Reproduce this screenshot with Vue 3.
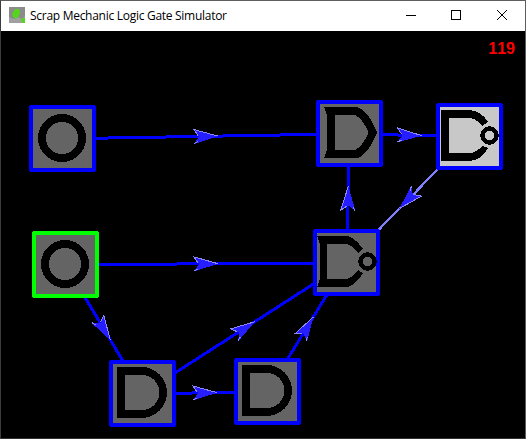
<script setup>
const nodes = [
  { id: 'a', kind: 'switch', x: 29, y: 105 },
  { id: 'b', kind: 'or', x: 316, y: 100 },
  { id: 'c', kind: 'nand', x: 436, y: 103, lit: true },
  { id: 'd', kind: 'switch', x: 32, y: 231, selected: true },
  { id: 'e', kind: 'nor', x: 313, y: 229 },
  { id: 'f', kind: 'and', x: 109, y: 360 },
  { id: 'g', kind: 'and', x: 234, y: 358 },
]

const links = [
  ['a', 'b'], ['b', 'c'], ['c', 'e', true], ['d', 'e'], ['e', 'b'],
  ['d', 'f'], ['f', 'e'], ['f', 'g'], ['g', 'e'],
]

const wires = links.map(([from, to, lit]) => {
  const s = nodes.find((n) => n.id === from)
  const t = nodes.find((n) => n.id === to)
  const x1 = s.x + 33.5
  const y1 = s.y + 33.8
  const x2 = t.x + 33.5
  const y2 = t.y + 33.8
  const angle = (Math.atan2(y2 - y1, x2 - x1) * 180) / Math.PI
  return {
    key: from + to, lit, x1, y1, x2, y2,
    arrow: `translate(${(x1 + x2) / 2} ${(y1 + y2) / 2}) rotate(${angle})`,
  }
})

const glyphs = {
  and: 'M8 7H32.5A25.5 25.5 0 0 1 32.5 58H8ZM16 15V50H33A17.5 17.5 0 0 0 33 15Z',
  or: 'M8 7H41Q52 10 61 32.5Q53 53 42 58H8L11 50V15ZM19 15V50H39Q47 46 52.5 32.5Q47 19 39 15Z',
  nand: 'M5 7H34Q45 8 52 19L46 23Q40 15 33 15H13V50H33Q40 50 46 43L52 45Q45 57 34 58H5Z',
  nor: 'M4 7H35Q43 10 50 20L45 24Q40 17 34 15H14V50H34Q40 48 45 41L50 44Q43 55 35 58H4L7 50V15Z',
}
</script>

<template>
  <div class="window">
    <header class="titlebar">
      <svg class="app-icon" width="16" height="16" viewBox="0 0 16 16">
        <rect width="16" height="16" fill="#8b8b8b" />
        <path d="M0 10L5 12L9 10L13 12L16 9V16H0Z" fill="#a0a0a0" />
        <path d="M6 2L10 2L11 5L10 9L7 12L4 10L3 7Z" fill="#55d51c" />
        <path d="M13 11H16V16H14L12 14Z" fill="#55d51c" />
      </svg>
      <span class="title">Scrap Mechanic Logic Gate Simulator</span>
      <nav class="controls">
        <svg width="46" height="29" viewBox="0 0 46 29"><path d="M19 14.5H29" /></svg>
        <svg width="46" height="29" viewBox="0 0 46 29"><rect x="18.5" y="9.5" width="9" height="9" /></svg>
        <svg class="close" width="46" height="29" viewBox="0 0 46 29"><path d="M18 9L28 19M28 9L18 19" /></svg>
      </nav>
    </header>
    <main class="canvas">
      <svg class="scene" width="524" height="407" viewBox="1 31 524 407">
        <g v-for="w in wires" :key="w.key">
          <line :class="['wire', { lit: w.lit }]" :x1="w.x1" :y1="w.y1" :x2="w.x2" :y2="w.y2" />
          <g :transform="w.arrow">
            <path class="arrow" d="M12.5 0L-12 7.5L-7 0L-12 -7.5Z" />
            <path class="arrow-edge" d="M12 0L-12 -7L-8 -1M-12 7L-8 5" />
          </g>
        </g>
        <g v-for="n in nodes" :key="n.id" :transform="`translate(${n.x} ${n.y})`">
          <rect :class="['body', { lit: n.lit }]" x="3" y="3" width="61" height="61" />
          <circle v-if="n.kind === 'switch'" class="ring" cx="33" cy="33" r="20" />
          <path v-else class="glyph" :d="glyphs[n.kind]" />
          <rect :class="['frame', { selected: n.selected }]" x="2" y="2" width="63" height="63" rx="1" />
          <circle v-if="n.kind === 'nand'" class="bubble" cx="53.5" cy="32.5" r="7" />
          <circle v-if="n.kind === 'nor'" class="bubble" cx="54.5" cy="32.5" r="7" />
        </g>
      </svg>
      <span class="fps">119</span>
    </main>
  </div>
</template>

<style>
body {
  margin: 0;
  background: #000;
}
</style>

<style scoped>
.window {
  box-sizing: border-box;
  width: 526px;
  height: 439px;
  display: flex;
  flex-direction: column;
  border: 1px solid #5e5e5e;
  border-left-color: #3c3c3c;
  border-bottom-color: #333;
  background: #000;
  overflow: hidden;
}
.titlebar {
  height: 30px;
  flex: none;
  display: flex;
  align-items: center;
  padding-left: 8px;
  background: #fff;
}
.app-icon {
  flex: none;
  margin-right: 5px;
  margin-bottom: 2px;
}
.title {
  flex: 1;
  font: 12px/28px "Open Sans", "Noto Sans", sans-serif;
  letter-spacing: -0.28px;
  white-space: nowrap;
  color: #000;
}
.controls {
  display: flex;
  height: 29px;
  align-self: flex-start;
}
.controls svg {
  fill: none;
  stroke: #000;
  stroke-width: 1;
}
.canvas {
  flex: 1;
  position: relative;
}
.scene {
  display: block;
  shape-rendering: crispEdges;
}
.wire {
  stroke: #00f;
  stroke-width: 3;
}
.wire.lit {
  stroke: #8080ff;
  stroke-width: 2.2;
}
.arrow {
  fill: #261eff;
}
.arrow-edge {
  fill: none;
  stroke: #8c88f8;
  stroke-width: 1;
}
.body {
  fill: #646464;
}
.body.lit {
  fill: #c8c8c8;
}
.frame {
  fill: none;
  stroke: #00f;
  stroke-width: 4;
  stroke-linejoin: round;
}
.frame.selected {
  stroke: #0f0;
}
.ring {
  fill: none;
  stroke: #000;
  stroke-width: 8;
}
.glyph {
  fill: #000;
  fill-rule: evenodd;
}
.bubble {
  fill: none;
  stroke: #000;
  stroke-width: 4.5;
}
.fps {
  position: absolute;
  top: 9px;
  right: 10px;
  font: bold 16px/18px "Liberation Sans", Arial, sans-serif;
  font-kerning: none;
  color: #f00;
}
</style>
